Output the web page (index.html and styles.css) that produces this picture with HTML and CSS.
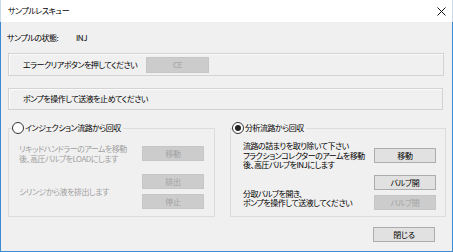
FILE: index.html
```html
<!DOCTYPE html>
<html lang="ja">
<head>
<meta charset="utf-8">
<title>サンプルレスキュー</title>
<link rel="stylesheet" href="styles.css">
</head>
<body>
<div class="window">
  <div class="titlebar">
    <span class="title">サンプルレスキュー</span>
    <span class="close"><svg width="9" height="9" viewBox="0 0 9 9"><path d="M0.5 0.5L8.5 8.5M8.5 0.5L0.5 8.5" stroke="#111" stroke-width="1"/></svg></span>
  </div>
  <div class="content">
    <div class="status"><span class="status-label">サンプルの状態:</span><span class="status-value">INJ</span></div>
    <div class="panel panel-ce">
      <span class="panel-text">エラークリアボタンを押してください</span>
      <button class="btn btn-ce" disabled>CE</button>
    </div>
    <div class="panel panel-pump">
      <span class="panel-text">ポンプを操作して送液を止めてください</span>
    </div>
    <div class="groups">
      <fieldset class="group group-left">
        <legend><span class="radio"></span>インジェクション流路から回収</legend>
        <div class="row row1">
          <div class="desc disabled-text">リキッドハンドラーのアームを移動<br>後、高圧バルブをLOADにします</div>
          <div class="btns"><button class="btn" disabled>移動</button></div>
        </div>
        <div class="row row2">
          <div class="desc disabled-text">シリンジから液を排出します</div>
          <div class="btns"><button class="btn" disabled>排出</button><button class="btn" disabled>停止</button></div>
        </div>
      </fieldset>
      <fieldset class="group group-right">
        <legend><span class="radio checked"></span>分析流路から回収</legend>
        <div class="row row1">
          <div class="desc">流路の詰まりを取り除いて下さい<br>フラクションコレクターのアームを移動<br>後、高圧バルブをINJにします</div>
          <div class="btns"><button class="btn">移動</button></div>
        </div>
        <div class="row row2">
          <div class="desc desc-low">分取バルブを開き、<br>ポンプを操作して送液してください</div>
          <div class="btns"><button class="btn">バルブ開</button><button class="btn" disabled>バルブ閉</button></div>
        </div>
      </fieldset>
    </div>
    <div class="footer"><button class="btn">閉じる</button></div>
  </div>
</div>
</body>
</html>
```
FILE: styles.css
```css
* { box-sizing: border-box; }
html, body { margin: 0; padding: 0; }
body {
  width: 453px;
  height: 252px;
  overflow: hidden;
  font-family: "Noto Sans CJK JP", "Noto Sans", sans-serif;
  font-size: 8px;
  letter-spacing: -0.5px;
  font-feature-settings: "palt";
  color: #000;
  background: #f0f0f0;
}
.window {
  width: 453px;
  height: 252px;
  display: flex;
  flex-direction: column;
}
.titlebar {
  height: 22px;
  flex: none;
  background: #fff;
  display: flex;
  align-items: center;
  justify-content: space-between;
  padding: 0 6px 0 7px;
  border-left: 1px solid #c9d9ea;
  border-right: 1px solid #c9d9ea;
}
.title { line-height: 12px; }
.close { display: flex; }
.content {
  flex: 1;
  background: #f0f0f0;
  border: 1px solid #3c8bd4;
  border-top: none;
  padding: 10px 8px 0 6px;
  display: flex;
  flex-direction: column;
}
.status {
  display: flex;
  line-height: 12px;
  height: 12px;
}
.status-label { flex: 0 0 69px; }
.panel {
  margin: 9px 0 0 1px;
  height: 23px;
  border: 1px solid #d3d3d3;
  box-shadow: inset 1px 1px 0 #fbfbfb;
  display: flex;
  align-items: center;
  padding-left: 14px;
}
.panel-pump { margin-top: 12px; height: 22px; margin-right: 1px; }
.panel-text { flex: 0 0 123px; line-height: 12px; white-space: nowrap; }
.btn {
  font-family: inherit;
  font-size: 8px;
  letter-spacing: -0.3px;
  font-feature-settings: "palt";
  width: 62px;
  height: 15px;
  padding: 0;
  line-height: 13px;
  background: #e1e1e1;
  border: 1px solid #adadad;
  color: #000;
  border-radius: 0;
}
.btn:disabled {
  background: #cccccc;
  border-color: #c6c6c6;
  color: #a2a2a2;
}
.btn-ce { height: 16px; width: 63px; }
.groups {
  display: flex;
  gap: 15px;
  margin-top: 12px;
}
.group {
  margin: 0;
  border: 1px solid #dcdcdc;
  padding: 0;
  min-width: 0;
}
.group-left { flex: 0 0 207px; margin-left: 1px; padding: 0 10px 7px 10px; }
.group-right { flex: 0 0 216px; padding: 0 9px 5px 12px; }
legend {
  padding: 0 2px 0 0;
  margin-left: -7px;
  display: flex;
  align-items: center;
  line-height: 12px;
  height: 12px;
}
.group-right legend { margin-left: -11px; }
.radio {
  width: 12px;
  height: 12px;
  border-radius: 50%;
  border: 1px solid #333;
  background: #fff;
  margin-right: 1px;
  display: inline-flex;
  align-items: center;
  justify-content: center;
}
.radio.checked::after {
  content: "";
  width: 6px;
  height: 6px;
  border-radius: 50%;
  background: #222;
}
.row {
  display: flex;
  justify-content: space-between;
  align-items: center;
}
.desc { line-height: 9.6px; white-space: nowrap; }
.disabled-text { color: #a0a0a0; }
.btns {
  display: flex;
  flex-direction: column;
  gap: 5px;
}
.group-left .row1 { margin-top: 10px; }
.group-left .row2 { margin-top: 11px; }
.group-right .row1 { margin-top: 7px; }
.group-right .row2 { margin-top: 5px; }
.desc-low { align-self: flex-end; margin-bottom: 2px; }
.footer {
  display: flex;
  justify-content: flex-end;
  padding-right: 9px;
  margin-top: 10px;
}
```
